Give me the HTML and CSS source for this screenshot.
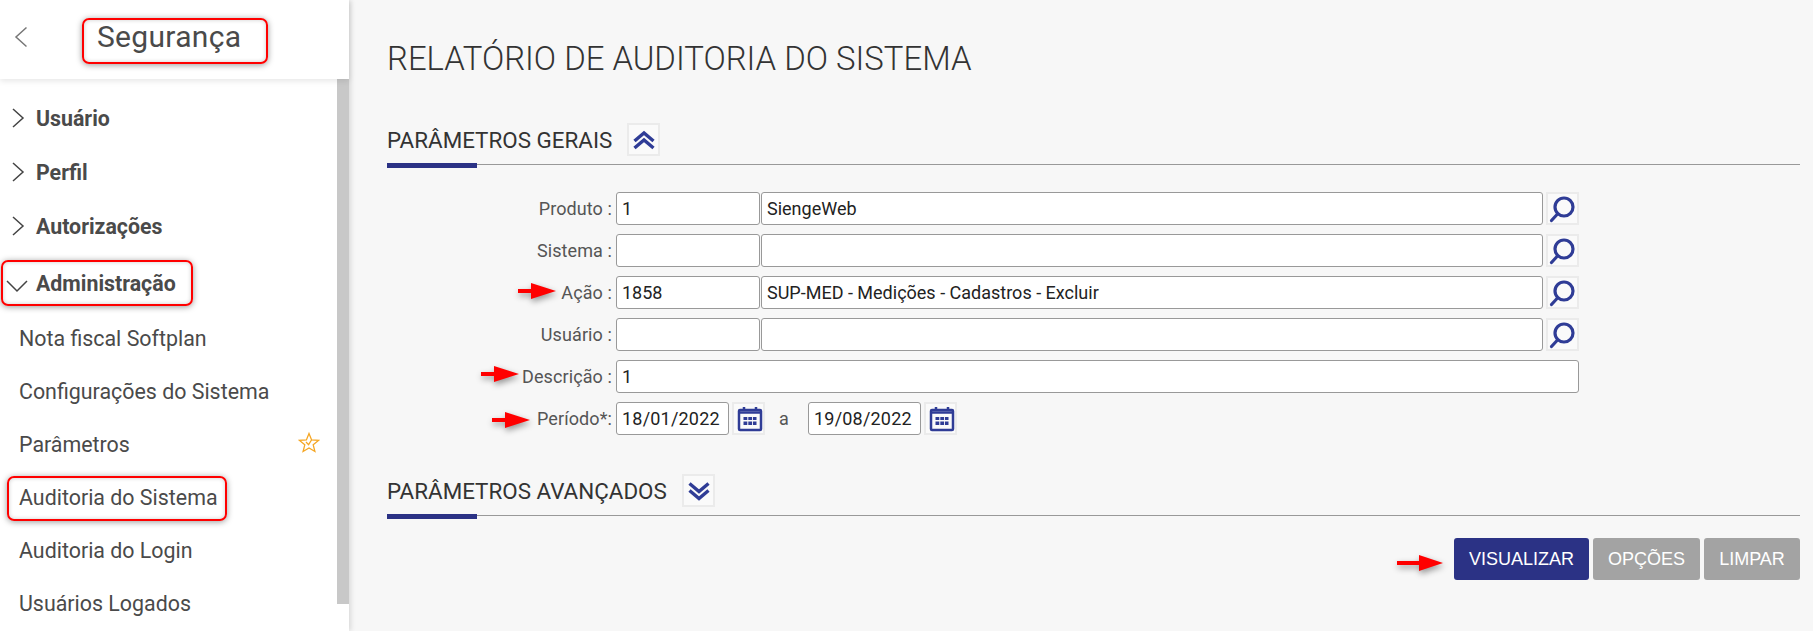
FILE: index.html
```html
<!DOCTYPE html>
<html>
  <head>
    <meta charset="utf-8">
    <title>Relatório de auditoria do sistema</title>
    <link rel="stylesheet" href="styles.css">
  </head>
  <body>
    <div class="page">
      <aside class="sidebar">
        <header class="side-head">
          <svg class="back" width="14" height="22" viewBox="0 0 14 22"><path d="M12.5 1.5 2 11l10.5 9.5"/></svg>
          <span class="side-title">Segurança</span>
        </header>
        <div class="side-body">
          <nav class="menu">
            <a class="group"><svg class="chev" width="14" height="22" viewBox="0 0 14 22"><path d="M2 2l10 9-10 9"/></svg>Usuário</a>
            <a class="group"><svg class="chev" width="14" height="22" viewBox="0 0 14 22"><path d="M2 2l10 9-10 9"/></svg>Perfil</a>
            <a class="group"><svg class="chev" width="14" height="22" viewBox="0 0 14 22"><path d="M2 2l10 9-10 9"/></svg>Autorizações</a>
            <a class="group open"><svg class="chev-down" width="22" height="14" viewBox="0 0 22 14"><path d="M1 2l10 10L21 2"/></svg>Administração</a>
            <a class="item">Nota fiscal Softplan</a>
            <a class="item">Configurações do Sistema</a>
            <a class="item">Parâmetros
              <svg class="star" width="22" height="22" viewBox="0 0 22 22"><path d="M11 1.500l2.600 6.400 6.900.5-5.300 4.400 1.700 6.700L11 16l-5.900 3.500 1.700-6.700-5.300-4.400 6.900-.5z"/><path d="M8 10l2.600 2.600L13.500 8"/></svg>
            </a>
            <a class="item">Auditoria do Sistema</a>
            <a class="item">Auditoria do Login</a>
            <a class="item">Usuários Logados</a>
          </nav>
          <div class="scroll"><div class="thumb"></div></div>
        </div>
      </aside>

      <main class="content">
        <h1 class="title">RELATÓRIO DE AUDITORIA DO SISTEMA</h1>

        <div class="sec-head">
          <h2>PARÂMETROS GERAIS</h2>
          <button class="icon-btn"><svg width="29" height="29" viewBox="0 0 29 29"><path d="M5.500 16 15 8l9.500 8M5.500 23 15 15l9.500 8"/></svg></button>
        </div>
        <div class="sep"><i></i><b></b></div>

        <form class="form">
          <div class="row">
            <label>Produto :</label>
            <input class="code" value="1"><input class="name" value="SiengeWeb">
            <button type="button" class="icon-btn search"><svg width="29" height="29" viewBox="0 0 29 29"><circle cx="16" cy="13" r="9"/><path d="M9.500 20 3.500 26.500"/></svg></button>
          </div>
          <div class="row">
            <label>Sistema :</label>
            <input class="code" value=""><input class="name" value="">
            <button type="button" class="icon-btn search"><svg width="29" height="29" viewBox="0 0 29 29"><circle cx="16" cy="13" r="9"/><path d="M9.500 20 3.500 26.500"/></svg></button>
          </div>
          <div class="row">
            <label>Ação :</label>
            <input class="code" value="1858"><input class="name" value="SUP-MED - Medições - Cadastros - Excluir">
            <button type="button" class="icon-btn search"><svg width="29" height="29" viewBox="0 0 29 29"><circle cx="16" cy="13" r="9"/><path d="M9.500 20 3.500 26.500"/></svg></button>
          </div>
          <div class="row">
            <label>Usuário :</label>
            <input class="code" value=""><input class="name" value="">
            <button type="button" class="icon-btn search"><svg width="29" height="29" viewBox="0 0 29 29"><circle cx="16" cy="13" r="9"/><path d="M9.500 20 3.500 26.500"/></svg></button>
          </div>
          <div class="row">
            <label>Descrição :</label>
            <input class="wide" value="1">
          </div>
          <div class="row">
            <label>Período*:</label>
            <input class="date" value="18/01/2022">
            <button type="button" class="icon-btn cal"><svg width="29" height="29" viewBox="0 0 29 29"><rect x="5" y="6" width="22" height="20" rx="1"/><path d="M5 8.500h22M10 3v4M22 3v4"/><path class="dots" d="M9.500 13h3.800v3H9.500zM14.300 13h3.800v3h-3.800zM19 13h3.500v3H19zM9.500 17.500h3.800v3.500H9.500zM14.300 17.500h3.800v3.500h-3.800zM19 17.500h3.500v3.500H19z"/></svg></button>
            <span class="to">a</span>
            <input class="date" value="19/08/2022">
            <button type="button" class="icon-btn cal"><svg width="29" height="29" viewBox="0 0 29 29"><rect x="5" y="6" width="22" height="20" rx="1"/><path d="M5 8.500h22M10 3v4M22 3v4"/><path class="dots" d="M9.500 13h3.800v3H9.500zM14.300 13h3.800v3h-3.800zM19 13h3.500v3H19zM9.500 17.500h3.800v3.500H9.500zM14.300 17.500h3.800v3.500h-3.800zM19 17.500h3.500v3.500H19z"/></svg></button>
          </div>
        </form>

        <div class="sec-head second">
          <h2>PARÂMETROS AVANÇADOS</h2>
          <button class="icon-btn"><svg width="29" height="29" viewBox="0 0 29 29"><path d="M5.500 7.500l9.500 8 9.500-8M5.500 14.500l9.500 8 9.500-8"/></svg></button>
        </div>
        <div class="sep"><i></i><b></b></div>

        <div class="actions">
          <button class="btn primary">VISUALIZAR</button>
          <button class="btn">OPÇÕES</button>
          <button class="btn">LIMPAR</button>
        </div>
      </main>
    </div>

    <!-- marcas vermelhas por cima da tela -->
    <div class="mark m-seg"></div>
    <div class="mark m-adm"></div>
    <div class="mark m-aud"></div>
    <svg class="arrow a-acao" width="40" height="18" viewBox="0 0 40 18"><path d="M0 7h13V1l25 8-25 8v-6H0z"/></svg>
    <svg class="arrow a-desc" width="40" height="18" viewBox="0 0 40 18"><path d="M0 7h13V1l25 8-25 8v-6H0z"/></svg>
    <svg class="arrow a-per" width="40" height="18" viewBox="0 0 40 18"><path d="M0 7h13V1l25 8-25 8v-6H0z"/></svg>
    <svg class="arrow a-vis" width="48" height="18" viewBox="0 0 48 18"><path d="M0 7h22V1l24 8-24 8v-6H0z"/></svg>
  </body>
</html>
```

FILE: styles.css
```css
body {
  margin: 0;
  background-color: #f7f7f7;
  font-family: Roboto, "Liberation Sans", sans-serif;
  font-size: 16px;
  color: #4a4a4a;
  overflow: hidden;
}

.page {
  display: flex;
  height: 631px;
}

/* menu lateral */
.sidebar {
  width: 349px;
  flex: none;
  background-color: #fff;
  box-shadow: 2px 0 5px rgba(0,0,0,0.12);
  display: flex;
  flex-direction: column;
}

.side-head {
  height: 79px;
  flex: none;
  display: flex;
  align-items: flex-start;
  box-shadow: 0 2px 6px rgba(0,0,0,0.1);
  position: relative;
}

.back {
  margin: 26px 0 0 14px;
  fill: none;
  stroke: #777;
  stroke-width: 1.5;
}

.side-title {
  margin: 15px 0 0 69px;
  font-size: 30px;
  line-height: 44px;
  color: #4a4a4a;
  letter-spacing: 0.3px;
}

.side-body {
  flex: 1;
  display: flex;
}

.menu {
  flex: 1;
  padding-top: 12px;
}

.group {
  display: flex;
  align-items: center;
  height: 54px;
  padding-left: 11px;
  font-size: 21.33px;
  font-weight: 700;
}

.group .chev {
  margin-right: 11px;
  fill: none;
  stroke: #444;
  stroke-width: 1.5;
}

.group.open {
  margin: 3px 0 2px 0;
  padding-left: 6px;
}

.chev-down {
  margin-right: 8px;
  margin-top: 6px;
  fill: none;
  stroke: #444;
  stroke-width: 1.5;
}

.item {
  display: flex;
  align-items: center;
  justify-content: space-between;
  height: 53px;
  padding: 0 20px 0 19px;
  font-size: 21.4px;
}

.star {
  fill: none;
  stroke: #f5a623;
  stroke-width: 1.3;
  margin-top: -4px;
  margin-right: -3px;
}

.scroll {
  width: 12px;
  flex: none;
}

.thumb {
  height: 525px;
  background-color: #c8c8c8;
}

/* conteudo */
.content {
  flex: 1;
  padding: 39px 13px 0 38px;
}

.title {
  margin: 0 0 44px 0;
  font-size: 32.9px;
  line-height: 40px;
  font-weight: 300;
  color: #333;
}

.sec-head {
  display: flex;
  align-items: center;
  height: 33px;
  margin-bottom: 7px;
}

.sec-head.second {
  margin-top: 39px;
}

.sec-head h2 {
  margin: 0 15px 0 0;
  font-size: 22.4px;
  font-weight: 400;
  color: #333;
}

.sep {
  display: flex;
  height: 5px;
}

.sep i {
  width: 90px;
  background-color: #2b3285;
}

.sep b {
  flex: 1;
  height: 1px;
  margin-top: 1px;
  background-color: #999;
}

.icon-btn {
  width: 33px;
  height: 33px;
  flex: none;
  padding: 0;
  border: 2px solid #ebebeb;
  background-color: #fafafa;
  display: flex;
}

.icon-btn svg {
  fill: none;
  stroke: #2f3c96;
  stroke-width: 3.4;
}

.icon-btn.search svg {
  stroke-width: 3.2;
  stroke-linecap: round;
}

.icon-btn.cal svg {
  stroke-width: 2.5;
}

.icon-btn .dots {
  fill: #2f3c96;
  stroke: none;
}

.form {
  margin-top: 24px;
}

.row {
  display: flex;
  align-items: center;
  height: 33px;
  margin-bottom: 9px;
}

.row:last-child {
  margin-bottom: 0;
}

.row label {
  width: 225px;
  flex: none;
  margin-right: 4px;
  text-align: right;
  font-size: 18px;
  letter-spacing: 0.1px;
  color: #555;
}

.row input {
  box-sizing: border-box;
  height: 33px;
  padding: 0 5px;
  border: 1px solid #999;
  border-radius: 3px;
  background-color: #fff;
  font-family: Roboto, "Liberation Sans", sans-serif;
  font-size: 18px;
  color: #222;
}

.row .code {
  width: 144px;
  margin-right: 1px;
}

.row .name {
  width: 782px;
  margin-right: 3px;
}

.row .wide {
  width: 963px;
}

.row .date {
  width: 113px;
  margin-right: 3px;
  letter-spacing: 0.2px;
}

.to {
  box-sizing: border-box;
  width: 43px;
  padding-right: 5px;
  text-align: center;
  font-size: 18px;
  color: #555;
}

.actions {
  display: flex;
  justify-content: flex-end;
  gap: 4px;
  margin-top: 19px;
}

.btn {
  height: 42px;
  width: 96px;
  border: none;
  border-radius: 3px;
  background-color: #a3a3a3;
  color: #fff;
  font-family: "Liberation Sans", Arial, sans-serif;
  font-size: 18px;
}

.btn:nth-child(2) {
  width: 107px;
}

.btn.primary {
  width: 135px;
  background-color: #2b3285;
}

/* anotacoes */
.mark {
  position: absolute;
  box-sizing: border-box;
  border: 2px solid #f00;
  border-radius: 7px;
  box-shadow: 0 1px 6px rgba(0,0,0,0.4), inset 0 0 4px rgba(0,0,0,0.2);
}

.m-seg { left: 82px; top: 18px; width: 186px; height: 46px; }
.m-adm { left: 1px; top: 260px; width: 192px; height: 46px; }
.m-aud { left: 7px; top: 476px; width: 220px; height: 45px; }

.arrow {
  position: absolute;
  fill: #f00;
  filter: drop-shadow(1px 3px 3px rgba(0,0,0,0.4));
}

.a-acao { left: 518px; top: 282px; }
.a-desc { left: 481px; top: 365px; }
.a-per { left: 492px; top: 411px; }
.a-vis { left: 1397px; top: 554px; }
```
